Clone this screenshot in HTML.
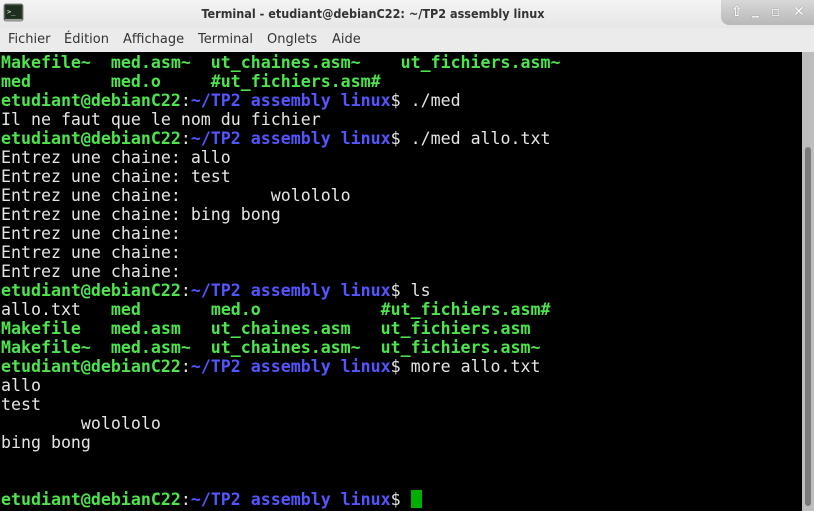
<!DOCTYPE html><html><head><style>
body{margin:0;width:814px;height:511px;overflow:hidden;background:#000;font-family:"DejaVu Sans","Liberation Sans",sans-serif;position:relative}
#title{position:absolute;left:0;top:0;width:814px;height:28px;background:linear-gradient(#f4f4f4,#e6e6e6);}
#title .t{position:absolute;left:0;width:746px;top:6px;text-align:center;font-size:12.5px;font-weight:bold;color:#333;font-family:"DejaVu Sans Condensed","Liberation Sans Narrow",sans-serif}
#btns{position:absolute;left:721px;top:0;width:93px;height:25px;background:linear-gradient(#d8d8d8,#b8b8b8);border-radius:0 0 0 8px}
#btns span{position:absolute;top:4px;color:#fff;font-size:14px;font-weight:bold;text-shadow:0 0 1px #666}
#menu{position:absolute;left:0;top:28px;width:814px;height:24px;background:#ebebeb;font-size:13px;color:#333}
#menu span{position:absolute;top:4px}
#term{position:absolute;left:0;top:52px;width:802px;height:459px;background:#000}
pre{margin:0;position:absolute;left:1px;top:1px;font-family:"DejaVu Sans Mono","Liberation Mono",monospace;font-size:16.6px;line-height:19px;color:#e5e5e5}
.g{color:#4ee44e;font-weight:bold}.b{color:#5555ff;font-weight:bold}.w{color:#e5e5e5}
#sb{position:absolute;left:802px;top:52px;width:12px;height:459px;background:#bdbdbd}
#th{position:absolute;left:3px;top:95px;width:6px;height:359px;background:#7a7a7a;border-radius:3px}
#cur{position:absolute;left:411px;top:490px;width:11px;height:18px;background:#00b000}
</style></head><body>
<div id="title"><svg style="position:absolute;left:3px;top:3px" width="22" height="20"><rect x="1" y="1" width="19" height="17" rx="2" fill="#2a3a2a" stroke="#888"/><rect x="3" y="3" width="15" height="12" fill="#1f2f1f"/><text x="4" y="11" font-size="7" fill="#fff" font-family="DejaVu Sans Mono">&gt;_</text><rect x="2" y="16" width="17" height="2" fill="#9a9a9a"/></svg>
<div class="t">Terminal - etudiant@debianC22: ~/TP2 assembly linux</div>
<div id="btns"><span style="left:10px">⇧</span><span style="left:31px;top:2px">_</span><span style="left:50px">▫</span><span style="left:72px">✕</span></div></div>
<div id="menu"><span style="left:8px">Fichier</span><span style="left:64px">Édition</span><span style="left:123px">Affichage</span><span style="left:198px">Terminal</span><span style="left:267px">Onglets</span><span style="left:332px">Aide</span></div>
<div id="term"><pre><span class="g">Makefile~  med.asm~  ut_chaines.asm~    ut_fichiers.asm~
med        med.o     #ut_fichiers.asm#
etudiant@debianC22</span>:<span class="b">~/TP2 assembly linux</span>$ ./med
Il ne faut que le nom du fichier
<span class="g">etudiant@debianC22</span>:<span class="b">~/TP2 assembly linux</span>$ ./med allo.txt
Entrez une chaine: allo
Entrez une chaine: test
Entrez une chaine:         wolololo
Entrez une chaine: bing bong
Entrez une chaine: 
Entrez une chaine: 
Entrez une chaine: 
<span class="g">etudiant@debianC22</span>:<span class="b">~/TP2 assembly linux</span>$ ls
allo.txt   <span class="g">med</span>       <span class="g">med.o</span>            <span class="g">#ut_fichiers.asm#</span>
<span class="g">Makefile   med.asm   ut_chaines.asm   ut_fichiers.asm
Makefile~  med.asm~  ut_chaines.asm~  ut_fichiers.asm~
etudiant@debianC22</span>:<span class="b">~/TP2 assembly linux</span>$ more allo.txt
allo
test
        wolololo
bing bong


<span class="g">etudiant@debianC22</span>:<span class="b">~/TP2 assembly linux</span>$ </pre></div>
<div id="cur"></div>
<div id="sb"><div id="th"></div></div>
</body></html>
